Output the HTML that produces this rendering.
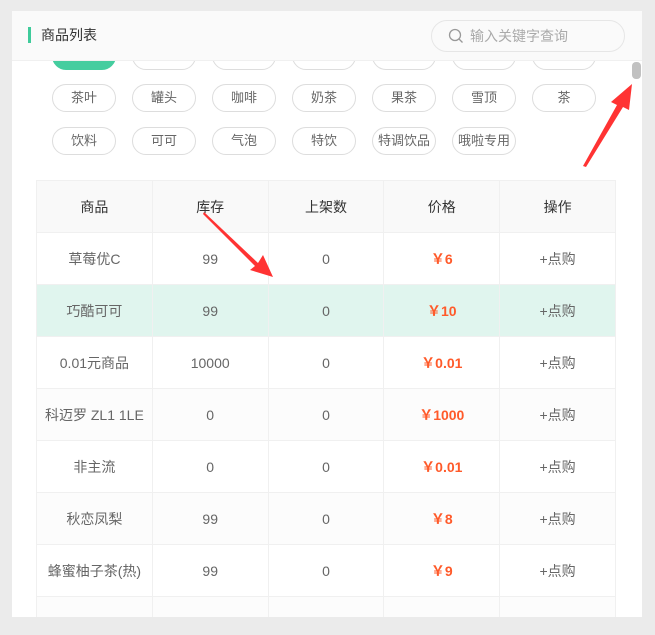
<!DOCTYPE html><html><head><meta charset="utf-8"><style>
body{margin:0;width:655px;height:635px;background:#ebebeb;font-family:"Liberation Sans","Noto Sans CJK SC",sans-serif;position:relative;overflow:hidden}
.card{position:absolute;left:12px;top:11px;width:630px;height:606px;background:#fff;overflow:hidden}
.hd{position:absolute;left:0;top:0;width:630px;height:49px;background:#fafafa;border-bottom:1px solid #f0f0f0;z-index:2}
.hd .t{position:absolute;left:16px;top:16px;font-size:14px;color:#333;border-left:3px solid #3fcb9b;padding-left:10px;line-height:16px}
.srch{position:absolute;left:419px;top:9px;width:192px;height:30px;border:1px solid #e6e6e6;border-radius:16px;background:#fafafa;font-size:14px;color:#aaa;line-height:30px}
.tag{position:absolute;width:62px;height:26px;border:1px solid #ddd;border-radius:14px;font-size:13px;color:#666;text-align:center;line-height:26px}
table{position:absolute;left:24px;top:169px;width:580px;table-layout:fixed;border-collapse:collapse;font-size:14px;color:#666}
td{height:51px;border:1px solid #f0f0f0;text-align:center;padding:0}
tr.h td{background:#f9f9f9;color:#333}
tr.g td{background:#fcfcfc}
tr.s td{background:#e0f5ee}
.p{color:#ff5a2a;font-weight:bold}
</style></head><body>
<div class="card">
<div class="hd"><div class="t">商品列表</div>
<div class="srch"><svg width="16" height="16" style="position:absolute;left:16px;top:7px"><circle cx="7" cy="7" r="5.5" fill="none" stroke="#999" stroke-width="1.3"/><line x1="11" y1="11" x2="14.5" y2="14.5" stroke="#999" stroke-width="1.3"/></svg><span style="position:absolute;left:38px">输入关键字查询</span></div></div>
<div class="tag" style="left:40px;top:31px;background:#45cd9f;border-color:#45cd9f"></div>
<div class="tag" style="left:120px;top:31px"></div><div class="tag" style="left:200px;top:31px"></div><div class="tag" style="left:280px;top:31px"></div><div class="tag" style="left:360px;top:31px"></div><div class="tag" style="left:440px;top:31px"></div><div class="tag" style="left:520px;top:31px"></div>
<div class="tag" style="left:40px;top:73px">茶叶</div><div class="tag" style="left:120px;top:73px">罐头</div><div class="tag" style="left:200px;top:73px">咖啡</div><div class="tag" style="left:280px;top:73px">奶茶</div><div class="tag" style="left:360px;top:73px">果茶</div><div class="tag" style="left:440px;top:73px">雪顶</div><div class="tag" style="left:520px;top:73px">茶</div>
<div class="tag" style="left:40px;top:116px">饮料</div><div class="tag" style="left:120px;top:116px">可可</div><div class="tag" style="left:200px;top:116px">气泡</div><div class="tag" style="left:280px;top:116px">特饮</div><div class="tag" style="left:360px;top:116px">特调饮品</div><div class="tag" style="left:440px;top:116px">哦啦专用</div>
<table>
<tr class="h"><td>商品</td><td>库存</td><td>上架数</td><td>价格</td><td>操作</td></tr>
<tr><td>草莓优C</td><td>99</td><td>0</td><td class="p">￥6</td><td>+点购</td></tr>
<tr class="s"><td>巧酷可可</td><td>99</td><td>0</td><td class="p">￥10</td><td>+点购</td></tr>
<tr><td>0.01元商品</td><td>10000</td><td>0</td><td class="p">￥0.01</td><td>+点购</td></tr>
<tr class="g"><td>科迈罗 ZL1 1LE</td><td>0</td><td>0</td><td class="p">￥1000</td><td>+点购</td></tr>
<tr><td>非主流</td><td>0</td><td>0</td><td class="p">￥0.01</td><td>+点购</td></tr>
<tr class="g"><td>秋恋凤梨</td><td>99</td><td>0</td><td class="p">￥8</td><td>+点购</td></tr>
<tr><td>蜂蜜柚子茶(热)</td><td>99</td><td>0</td><td class="p">￥9</td><td>+点购</td></tr>
<tr class="g"><td></td><td></td><td></td><td></td><td></td></tr>
</table>
<div style="position:absolute;left:620px;top:51px;width:9px;height:17px;background:#c1c1c1;border-radius:4px"></div>
</div>
<svg width="655" height="635" style="position:absolute;left:0;top:0">
<polygon points="583,166 617,105 611,102 632,84 629,110 623,107 586,167" fill="#f33"/>
<polygon points="204,212 258,263 263,255 273,277 250,270 255,266 203,214" fill="#f33"/>
</svg>
</body></html>
